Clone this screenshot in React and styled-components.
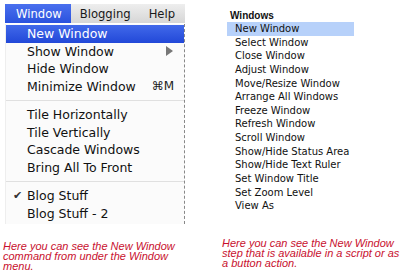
import React from "react";
import styled, { createGlobalStyle } from "styled-components";

const Global = createGlobalStyle`
  html, body { margin: 0; padding: 0; background: #fff; }
  body { width: 400px; height: 277px; overflow: hidden; }
`;

const Page = styled.div`
  display: flex;
  width: 400px;
  height: 277px;
`;

const LeftCol = styled.div`
  width: 200px;
  display: flex;
  flex-direction: column;
  padding-top: 4px;
  box-sizing: border-box;
`;

const MenuBar = styled.div`
  margin-left: 5px;
  width: 180px;
  height: 19px;
  display: flex;
  align-items: stretch;
  background: linear-gradient(#eeeeee, #d6d6d6);
  font-family: "DejaVu Sans", sans-serif;
  font-size: 11.6px;
  color: #1a1a1a;
`;

const BarItem = styled.div`
  display: flex;
  align-items: center;
  padding: 0 ${(p) => p.$pr || 9}px 0 ${(p) => p.$pl || 9}px;
  background: ${(p) => (p.$active ? "linear-gradient(#4a70ee, #2a52de)" : "transparent")};
  color: ${(p) => (p.$active ? "#fff" : "#1a1a1a")};
`;

const Dropdown = styled.div`
  margin-left: 5px;
  margin-top: 1px;
  width: 180px;
  padding: 1px 0 2px;
  background: #fbfbfb;
  border-right: 1px dashed #888;
  border-left: 1px solid #eee;
  box-sizing: border-box;
  font-family: "DejaVu Sans", sans-serif;
  font-size: 12.5px;
  color: #111;
`;

const MenuRow = styled.div`
  height: 17.5px;
  display: flex;
  align-items: center;
  padding: 0 10px 0 7px;
  background: ${(p) => (p.$active ? "linear-gradient(#4169ea, #2248d8)" : "transparent")};
  color: ${(p) => (p.$active ? "#fff" : "#111")};
`;

const Check = styled.span`
  width: 14px;
  font-size: 11px;
  color: #333;
`;

const Label = styled.span`
  flex: 1;
`;

const Shortcut = styled.span`
  color: #222;
  font-size: 12px;
`;

const Arrow = styled.span`
  width: 0;
  height: 0;
  border-top: 5px solid transparent;
  border-bottom: 5px solid transparent;
  border-left: 7px solid #777;
  margin-right: 1px;
`;

const Separator = styled.div`
  height: 11px;
  display: flex;
  align-items: center;
  &::after {
    content: "";
    flex: 1;
    height: 1px;
    background: #e0e0e0;
  }
`;

const Caption = styled.p`
  margin: ${(p) => p.$mt}px 0 0 ${(p) => p.$ml}px;
  width: ${(p) => p.$w}px;
  font-family: "Liberation Sans", Arial, sans-serif;
  font-style: italic;
  font-size: 11px;
  line-height: 10px;
  color: #c8102e;
`;

const RightCol = styled.div`
  width: 200px;
  display: flex;
  flex-direction: column;
  padding: 10px 0 0 27px;
  box-sizing: border-box;
`;

const ListTitle = styled.div`
  font-family: "Liberation Sans", Arial, sans-serif;
  font-weight: bold;
  font-size: 10px;
  height: 12px;
  line-height: 12px;
  padding-left: 3px;
  color: #111;
`;

const StepList = styled.div`
  display: flex;
  flex-direction: column;
  font-family: "DejaVu Sans", sans-serif;
  font-size: 10px;
  color: #111;
`;

const Step = styled.div`
  width: 127px;
  height: 13.65px;
  line-height: 13.65px;
  padding-left: 8px;
  box-sizing: border-box;
  white-space: nowrap;
  background: ${(p) => (p.$active ? "#b7d1fa" : "transparent")};
`;

const menuGroups = [
  [
    { label: "New Window", active: true },
    { label: "Show Window", arrow: true },
    { label: "Hide Window" },
    { label: "Minimize Window", shortcut: "⌘M" },
  ],
  [
    { label: "Tile Horizontally" },
    { label: "Tile Vertically" },
    { label: "Cascade Windows" },
    { label: "Bring All To Front" },
  ],
  [{ label: "Blog Stuff", check: true }, { label: "Blog Stuff - 2" }],
];

const steps = [
  "New Window",
  "Select Window",
  "Close Window",
  "Adjust Window",
  "Move/Resize Window",
  "Arrange All Windows",
  "Freeze Window",
  "Refresh Window",
  "Scroll Window",
  "Show/Hide Status Area",
  "Show/Hide Text Ruler",
  "Set Window Title",
  "Set Zoom Level",
  "View As",
];

export default function App() {
  return (
    <Page>
      <Global />
      <LeftCol>
        <MenuBar>
          <BarItem $active $pl={11} $pr={9}>Window</BarItem>
          <BarItem $pl={9} $pr={9}>Blogging</BarItem>
          <BarItem $pl={9}>Help</BarItem>
        </MenuBar>
        <Dropdown>
          {menuGroups.map((group, gi) => (
            <React.Fragment key={gi}>
              {gi > 0 && <Separator />}
              {group.map((item) => (
                <MenuRow key={item.label} $active={item.active}>
                  <Check>{item.check ? "✔" : ""}</Check>
                  <Label>{item.label}</Label>
                  {item.arrow && <Arrow />}
                  {item.shortcut && <Shortcut>{item.shortcut}</Shortcut>}
                </MenuRow>
              ))}
            </React.Fragment>
          ))}
        </Dropdown>
        <Caption $mt={17} $ml={3} $w={185}>
          Here you can see the New Window command from under the Window menu.
        </Caption>
      </LeftCol>
      <RightCol>
        <ListTitle>Windows</ListTitle>
        <StepList>
          {steps.map((s, i) => (
            <Step key={s} $active={i === 0}>
              {s}
            </Step>
          ))}
        </StepList>
        <Caption $mt={25} $ml={-5} $w={180}>
          Here you can see the New Window step that is available in a script or as a button action.
        </Caption>
      </RightCol>
    </Page>
  );
}
